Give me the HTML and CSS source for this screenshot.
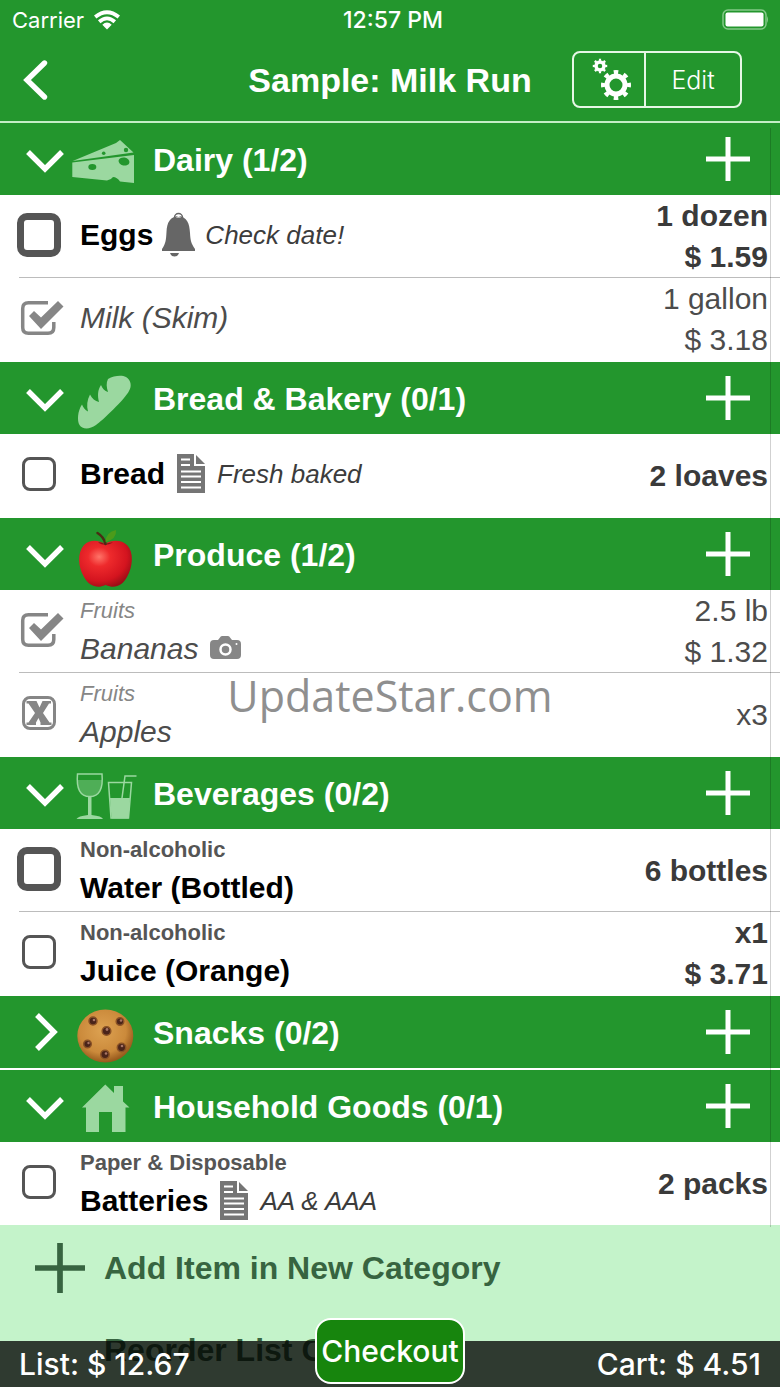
FILE: index.html
```html
<!DOCTYPE html>
<html lang="en">
<head>
<meta charset="utf-8">
<meta name="viewport" content="width=device-width, initial-scale=1">
<title>Sample: Milk Run</title>
<link rel="stylesheet" href="styles.css">
</head>
<body>
<svg class="defs" aria-hidden="true">
  <symbol id="chevron" viewBox="0 0 38 24"><path d="M2 3 L19 20 L36 3" fill="none" stroke="#fff" stroke-width="5.400"/></symbol>
  <symbol id="plus" viewBox="0 0 44 44"><path d="M22 0V44M0 22H44" fill="none" stroke="currentColor" stroke-width="5"/></symbol>
  <symbol id="tick" viewBox="0 0 44 36">
    <path d="M28 2.700H8.500Q2.700 2.700 2.700 8.500V27.500Q2.700 33.300 8.500 33.300H28Q33.800 33.300 33.800 27.500V22" fill="none" stroke="#868686" stroke-width="3.500"/>
    <path d="M9 16 L14 11 L21 17.500 L38 1 L43.500 6.500 L21 29 Z" fill="#868686"/>
  </symbol>
  <symbol id="doc" viewBox="0 0 34 44">
    <path d="M3 2H20V14H31V41H3Z" fill="#757575"/><path d="M22 3V12H31Z" fill="#757575"/>
    <path d="M7 7.500H16M7 13H16M7 19.500H27M7 24.500H27M7 30H27M7 35.500H27" stroke="#fff" stroke-width="2"/>
  </symbol>
</svg>
<div class="app">
  <header class="top">
    <div class="status">
      <div class="carrier">Carrier
        <svg width="26" height="19" viewBox="0 0 26 19" fill="none" stroke="#fff" stroke-width="3.800"><path d="M1.200 6Q13 -3.500 24.800 6M5.200 10.700Q13 4 20.800 10.700"/><path d="M8.300 13.800Q13 9.300 17.700 13.800L13 18.500Z" fill="#fff" stroke="none"/></svg>
      </div>
      <div class="time">12:57 PM</div>
      <svg class="battery" width="46" height="22" viewBox="0 0 46 22"><rect x="1" y="1" width="43" height="19" rx="5" fill="none" stroke="#84c988" stroke-width="1.500"/><rect x="3.500" y="3.500" width="38" height="14" rx="2" fill="#fff"/><path d="M45 7Q47 10.500 45 14Z" fill="#84c988"/></svg>
    </div>
    <div class="nav">
      <button class="back" aria-label="Back"><svg width="26" height="42" viewBox="0 0 26 42"><path d="M22.500 4L5 21L22.500 38" fill="none" stroke="#fff" stroke-width="5.400" stroke-linecap="round"/></svg></button>
      <h1>Sample: Milk Run</h1>
      <div class="tools">
        <button aria-label="Settings">
          <svg width="42" height="46" viewBox="0 0 42 46" fill="none" stroke="#fff">
            <circle cx="10" cy="9" r="4" stroke-width="3.500"/><circle cx="10" cy="9" r="6" stroke-width="2.500" pathLength="16" stroke-dasharray="0.900 1.100" stroke-dashoffset="0.450"/>
            <circle cx="26" cy="28" r="9" stroke-width="5"/><circle cx="26" cy="28" r="13" stroke-width="4" pathLength="16" stroke-dasharray="0.900 1.100" stroke-dashoffset="0.450"/>
          </svg>
        </button>
        <button>Edit</button>
      </div>
    </div>
  </header>

  <main class="list">
    <section class="group">
      <div class="cat">
        <button class="fold" aria-label="Collapse Dairy"><svg width="38" height="24"><use href="#chevron"/></svg></button>
        <svg class="pic" viewBox="0 0 64 60"><path d="M.7 32L44 14L48 11L61.500 23.500Z M.3 33.500L62 26V54L48 52.500Q45 48 41 48Q39 51 35 51.500L.3 48Z" fill="#9bd8a0"/><g fill="#23962d"><ellipse cx="20.300" cy="38" rx="4" ry="3"/><ellipse cx="52" cy="32.500" rx="5.500" ry="4" transform="rotate(12 52 32.500)"/><circle cx="54" cy="21" r="2.200"/><circle cx="31.700" cy="24.200" r="1.800"/></g></svg>
        <h2>Dairy (1/2)</h2>
        <button class="add" aria-label="Add to Dairy"><svg width="44" height="44"><use href="#plus"/></svg></button>
      </div>
      <div class="row">
        <label class="check"><input type="checkbox" class="high" aria-label="Eggs"></label>
        <div class="item"><div class="line"><span class="name">Eggs</span>
          <svg class="mark" viewBox="0 0 34 44"><circle cx="16.500" cy="4.500" r="4" fill="none" stroke="#666" stroke-width="1.500"/><path d="M16.500 3C25 4 27.500 10 28 20C28.500 28 29 30 33 36V38H0V36C4 30 4 27 4.500 19C5 9 8 4 16.500 3Z" fill="#666"/><path d="M8 40H17Q16 43.500 12.500 43.500Q9 43.500 8 40Z" fill="#666"/><path d="M14 4.500Q16.500 1.500 19 4.500Z" fill="#fff"/></svg>
          <em>Check date!</em></div></div>
        <div class="qty"><div>1 dozen</div><div>$ 1.59</div></div>
      </div>
      <div class="row done">
        <label class="check"><input type="checkbox" checked aria-label="Milk (Skim)"><svg width="44" height="36"><use href="#tick"/></svg></label>
        <div class="item"><div class="line"><span class="name">Milk (Skim)</span></div></div>
        <div class="qty"><div>1 gallon</div><div>$ 3.18</div></div>
      </div>
    </section>

    <section class="group">
      <div class="cat">
        <button class="fold" aria-label="Collapse Bread &amp; Bakery"><svg width="38" height="24"><use href="#chevron"/></svg></button>
        <svg class="pic" viewBox="0 0 64 60"><path d="M36 11C42 7.500 50 7 54 9C59 12 60 18 57 23C53 31 30 53 24 57C17 62 10 61 7.500 57C5 53 5.500 43 10 36.500C11 39 13 42.500 16 43.500C14.500 38 15 32 18 26.500C20 30.500 23 33 27 34C25.500 28 25.500 22 29 17C30.500 20.500 32.500 23 36 24C34.500 19 34 15 36 11Z" fill="#9bd8a0"/></svg>
        <h2>Bread &amp; Bakery (0/1)</h2>
        <button class="add" aria-label="Add to Bread &amp; Bakery"><svg width="44" height="44"><use href="#plus"/></svg></button>
      </div>
      <div class="row">
        <label class="check"><input type="checkbox" aria-label="Bread"></label>
        <div class="item"><div class="line"><span class="name">Bread</span><svg class="mark"><use href="#doc"/></svg><em>Fresh baked</em></div></div>
        <div class="qty"><div>2 loaves</div></div>
      </div>
    </section>

    <section class="group">
      <div class="cat">
        <button class="fold" aria-label="Collapse Produce"><svg width="38" height="24"><use href="#chevron"/></svg></button>
        <svg class="pic" viewBox="0 0 64 60">
          <defs><radialGradient id="red" cx=".38" cy=".35" r=".7"><stop offset="0" stop-color="#ff7468"/><stop offset=".3" stop-color="#ee2a2c"/><stop offset=".75" stop-color="#d4141f"/><stop offset="1" stop-color="#9b0d16"/></radialGradient></defs>
          <path d="M33 20C40 15 50 16 55 21C62 28 61 43 55 53C50 62 43 65 33.500 61C25 65 17 62 12 53C6 43 5 29 12 21C18 15 27 16 33 20Z" fill="url(#red)"/>
          <path d="M26 18.500Q33 23 41 18.500Q37 18 33 20Q29 17.500 26 18.500Z" fill="#8d1019"/>
          <path d="M25.500 9Q32 13 33.500 20" fill="none" stroke="#4a2d14" stroke-width="2.500" stroke-linecap="round"/><path d="M33.500 18Q34 8 44 6Q45 15 33.500 18Z" fill="#4b9b1a"/>
        </svg>
        <h2>Produce (1/2)</h2>
        <button class="add" aria-label="Add to Produce"><svg width="44" height="44"><use href="#plus"/></svg></button>
      </div>
      <div class="row done">
        <label class="check"><input type="checkbox" checked aria-label="Bananas"><svg width="44" height="36"><use href="#tick"/></svg></label>
        <div class="item"><div class="sub">Fruits</div><div class="line"><span class="name">Bananas</span>
          <svg class="mark" viewBox="0 0 34 44"><path d="M7 13H11L13 10.500Q13.500 9 15 9H21Q22.500 9 23 10.500L25 13H30Q34 13 34 17V28Q34 32 30 32H7Q3 32 3 28V17Q3 13 7 13Z" fill="#868686"/><circle cx="18.500" cy="22.500" r="5" fill="none" stroke="#fff" stroke-width="2.500"/><circle cx="29.500" cy="17" r="1" fill="#fff"/></svg></div></div>
        <div class="qty"><div>2.5 lb</div><div>$ 1.32</div></div>
      </div>
      <div class="row done">
        <label class="check"><input type="checkbox" class="skip" checked aria-label="Apples"><svg width="44" height="36" viewBox="0 0 44 36"><path d="M6.500 6H16.500L19.500 12.500L22.500 6H31V8.500H29L23 18L29.500 27.500H31.500V30H20.500V27.500L18.500 23L16 27.500V30H6.500V27.500H8.500L15 18L8.500 8.500H6.500Z" fill="#868686"/></svg></label>
        <div class="item"><div class="sub">Fruits</div><div class="line"><span class="name">Apples</span></div></div>
        <div class="qty"><div>x3</div></div>
      </div>
      <div class="watermark">UpdateStar.com</div>
    </section>

    <section class="group">
      <div class="cat">
        <button class="fold" aria-label="Collapse Beverages"><svg width="38" height="24"><use href="#chevron"/></svg></button>
        <svg class="pic" viewBox="0 0 64 60"><path d="M5.500 17H30Q29.500 33 17.700 33Q6 33 5.500 17Z" fill="#4fae57"/><path d="M5.500 11H30Q32 33.500 17.700 33.500Q3.500 33.500 5.500 11Z" fill="none" stroke="#9bd8a0" stroke-width="1.500"/><path d="M16 33H19.500V52Q30 53 31 56H4.500Q6 53 16 52ZM38 35H58L56.500 55.500H39.500Z" fill="#9bd8a0"/><path d="M36.500 19.500H59.500L56.500 55H39ZM64.500 13H53L50 35" fill="none" stroke="#9bd8a0" stroke-width="1.500"/></svg>
        <h2>Beverages (0/2)</h2>
        <button class="add" aria-label="Add to Beverages"><svg width="44" height="44"><use href="#plus"/></svg></button>
      </div>
      <div class="row">
        <label class="check"><input type="checkbox" class="high" aria-label="Water (Bottled)"></label>
        <div class="item"><div class="sub">Non-alcoholic</div><div class="line"><span class="name">Water (Bottled)</span></div></div>
        <div class="qty"><div>6 bottles</div></div>
      </div>
      <div class="row">
        <label class="check"><input type="checkbox" aria-label="Juice (Orange)"></label>
        <div class="item"><div class="sub">Non-alcoholic</div><div class="line"><span class="name">Juice (Orange)</span></div></div>
        <div class="qty"><div>x1</div><div>$ 3.71</div></div>
      </div>
    </section>

    <section class="group folded">
      <div class="cat">
        <button class="fold" aria-label="Expand Snacks"><svg width="24" height="38" viewBox="0 0 24 38"><path d="M3 2L20 19L3 36" fill="none" stroke="#fff" stroke-width="5.400"/></svg></button>
        <svg class="pic" viewBox="0 0 64 60">
          <defs><radialGradient id="dough" cx=".45" cy=".4" r=".6"><stop offset="0" stop-color="#dda252"/><stop offset=".7" stop-color="#cb8a3b"/><stop offset="1" stop-color="#96591c"/></radialGradient></defs>
          <ellipse cx="33.300" cy="34" rx="28" ry="26.500" fill="url(#dough)"/>
          <g fill="#4a241a" stroke="#8a5226" stroke-width="1.500"><circle cx="21" cy="19" r="4"/><circle cx="48" cy="19.500" r="3.800"/><circle cx="34.500" cy="29" r="4.300"/><circle cx="15.500" cy="42" r="3.800"/><circle cx="49.500" cy="45.500" r="4.200"/><circle cx="33" cy="52.500" r="4.200"/></g>
          <g fill="#a87565"><circle cx="22" cy="18" r="1.300"/><circle cx="49" cy="18.500" r="1.300"/><circle cx="35" cy="27.500" r="1.400"/><circle cx="16.500" cy="41" r="1.200"/><circle cx="50" cy="44" r="1.300"/><circle cx="34" cy="51.500" r="1.300"/></g>
        </svg>
        <h2>Snacks (0/2)</h2>
        <button class="add" aria-label="Add to Snacks"><svg width="44" height="44"><use href="#plus"/></svg></button>
      </div>
    </section>

    <section class="group last">
      <div class="cat">
        <button class="fold" aria-label="Collapse Household Goods"><svg width="38" height="24"><use href="#chevron"/></svg></button>
        <svg class="pic" viewBox="0 0 64 60"><path d="M33.300 8.500L42 17V10H51V25.500L57.500 31.500H53.500V56H40V36H27V56H14V31.500H10Z" fill="#9bd8a0"/></svg>
        <h2>Household Goods (0/1)</h2>
        <button class="add" aria-label="Add to Household Goods"><svg width="44" height="44"><use href="#plus"/></svg></button>
      </div>
      <div class="row">
        <label class="check"><input type="checkbox" aria-label="Batteries"></label>
        <div class="item"><div class="sub">Paper &amp; Disposable</div><div class="line"><span class="name">Batteries</span><svg class="mark"><use href="#doc"/></svg><em>AA &amp; AAA</em></div></div>
        <div class="qty"><div>2 packs</div></div>
      </div>
    </section>

    <div class="actions">
      <button><svg width="50" height="50"><use href="#plus"/></svg>Add Item in New Category</button>
      <button><span class="blank"></span>Reorder List C</button>
    </div>
    <div class="guide"></div>
  </main>

  <footer class="totals">
    <span>List: $ 12.67</span>
    <button class="checkout">Checkout</button>
    <span>Cart: $ 4.51</span>
  </footer>
</div>
</body>
</html>
```

FILE: styles.css
```css
* { box-sizing: border-box; }
body { margin: 0; font-family: "Liberation Sans", Arial, sans-serif; background: #c4f3ca; }
button { margin: 0; padding: 0; border: 0; background: none; color: inherit; font: inherit; cursor: pointer; }
h1, h2 { margin: 0; font-weight: bold; }
svg { display: block; overflow: visible; flex: none; }
.defs { position: absolute; width: 0; height: 0; }

.app { position: relative; height: 100vh; display: flex; flex-direction: column; overflow: hidden; }

/* Status and navigation bars */
.top { flex: none; background: #23962d; color: #fff; border-bottom: 2px solid #c4eec6; }
.status { height: 40px; padding: 0 12px; display: grid; grid-template-columns: 1fr auto 1fr; align-items: center; font: 22px Inter, sans-serif; }
.carrier { display: flex; align-items: center; gap: 10px; }
.time { font-size: 23px; font-weight: 500; padding-left: 6px; }
.battery { justify-self: end; }
.nav { height: 81px; padding: 0 38px 2px 22px; display: grid; grid-template-columns: 1fr auto 1fr; align-items: center; }
.nav h1 { font-size: 34px; line-height: 40px; padding-left: 16px; }
.back { justify-self: start; }
.tools { justify-self: end; display: flex; height: 57px; border: 2px solid #e6f7e6; border-radius: 8px; }
.tools button { width: 70px; padding-left: 4px; display: flex; align-items: center; justify-content: center; }
.tools button + button { width: 96px; padding: 0; border-left: 2px solid #e6f7e6; font: 300 25px Inter, sans-serif; }

/* Shopping list */
.list { position: relative; flex: 1; min-height: 0; overflow-y: auto; scrollbar-width: none; }
.group { position: relative; padding-bottom: 1px; background: #fff; }
.group.folded { padding-bottom: 2px; }
.group.last { padding-bottom: 0; }
.cat { height: 72px; padding-right: 30px; display: flex; align-items: center; background: #23962d; color: #fff; }
.fold { width: 72px; padding: 4px 0 0 26px; display: flex; justify-content: flex-start; }
.folded .fold { padding-left: 34px; padding-top: 0; }
.pic { width: 64px; height: 60px; }
.cat h2 { flex: 1; padding: 2px 0 0 17px; font-size: 32px; line-height: 40px; }
.add { display: flex; }

.row { min-height: 83px; margin-left: 19px; padding-right: 12px; display: flex; align-items: center; border-bottom: 1px solid transparent; background: #fff; }
.row:has(+ .row) { border-bottom-color: #bcbcbc; }
.check { width: 61px; display: grid; justify-items: start; align-items: center; padding-left: 1px; margin-bottom: 3px; }
.check > * { grid-area: 1 / 1; }
.check input { appearance: none; width: 34px; height: 34px; margin: 0 2px; border: 3px solid #555; border-radius: 8px; background: #fff; }
.check input.high { width: 44px; height: 44px; margin: 0 -3px; border-width: 7px; border-radius: 10px; }
.check input:checked { border-color: transparent; }
.check input.skip:checked { border-color: #868686; }
.item { flex: 1; padding-bottom: 3px; }
.item:has(.sub) { padding: 2px 0 0; }
.sub { font-size: 22px; line-height: 34px; font-weight: bold; color: #555; }
.line { height: 42px; display: flex; align-items: center; gap: 9px; }
.name { font-size: 30px; line-height: 42px; font-weight: bold; color: #000; }
.line em { font-size: 26px; line-height: 40px; color: #3c3c3c; }
.mark { width: 34px; height: 44px; }
.qty { text-align: right; font-size: 30px; line-height: 41px; font-weight: bold; color: #3a3a3a; }
.done .sub { font-weight: normal; font-style: italic; color: #868686; }
.done .name { font-weight: normal; font-style: italic; color: #4c4c4c; }
.done .qty { font-weight: normal; color: #4c4c4c; }

.watermark { position: absolute; left: 0; right: 0; bottom: 31px; text-align: center; font: 43px/60px "Open Sans", sans-serif; color: #8f8f8f; pointer-events: none; }
.guide { position: absolute; top: 5px; right: 9px; width: 1px; height: 1099px; background: rgba(0, 0, 0, .18); }

.actions { padding-top: 2px; background: #c4f3ca; color: #376440; font-size: 32px; font-weight: bold; }
.actions button { width: 100%; height: 82px; padding-left: 35px; display: flex; align-items: center; gap: 19px; }
.blank { width: 50px; }

/* Totals bar */
.totals { position: absolute; left: 0; right: 0; bottom: 0; height: 46px; padding: 0 19px; display: flex; align-items: center; justify-content: space-between; background: rgba(0, 0, 0, .76); color: #fff; font: 500 30px Inter, sans-serif; }
.checkout { position: absolute; left: 50%; bottom: 3px; width: 150px; height: 66px; margin-left: -75px; border: 2px solid #fff; border-radius: 16px; background: #17850d; }
```
